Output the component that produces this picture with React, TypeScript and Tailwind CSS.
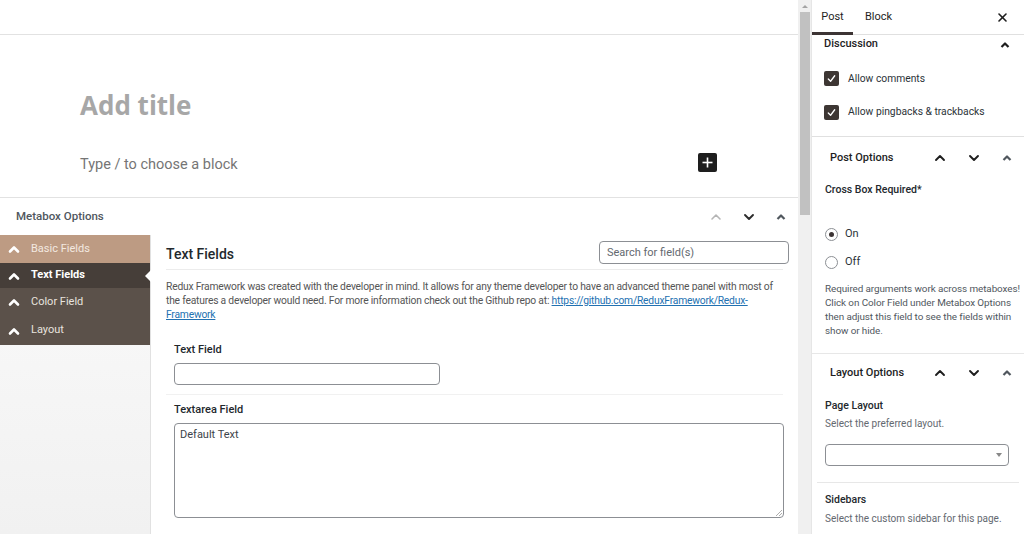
import React from "react";

const Up = ({ className = "", w = 12, sw = 1.6 }: { className?: string; w?: number; sw?: number }) => (
  <svg width={w} height={w} viewBox="0 0 12 12" className={className} fill="none" stroke="currentColor" strokeWidth={sw} strokeLinecap="round" strokeLinejoin="round">
    <polyline points="2,8 6,4 10,8" />
  </svg>
);
const Down = ({ className = "", w = 12, sw = 1.6 }: { className?: string; w?: number; sw?: number }) => (
  <svg width={w} height={w} viewBox="0 0 12 12" className={className} fill="none" stroke="currentColor" strokeWidth={sw} strokeLinecap="round" strokeLinejoin="round">
    <polyline points="2,4 6,8 10,4" />
  </svg>
);
const Caret = ({ className = "" }: { className?: string }) => (
  <svg width="10" height="10" viewBox="0 0 10 10" className={className} fill="none" stroke="currentColor" strokeWidth={2.2} strokeLinejoin="round">
    <polyline points="1.5,7 5,3.5 8.5,7" />
  </svg>
);
const NavChevron = () => (
  <svg width="12" height="10" viewBox="0 0 12 10" fill="none" stroke="white" strokeWidth={2.6} strokeLinecap="round" strokeLinejoin="round">
    <polyline points="2,7.5 6,3.5 10,7.5" />
  </svg>
);
const Check = () => (
  <span className="w-[15px] h-[15px] rounded-[2px] bg-[#3d3633] flex items-center justify-center shrink-0">
    <svg width="11" height="11" viewBox="0 0 12 12" fill="none" stroke="white" strokeWidth={1.4} strokeLinecap="round" strokeLinejoin="round">
      <polyline points="2.5,6.5 5,9 9.5,3" />
    </svg>
  </span>
);

const navItems = [
  { label: "Basic Fields", cls: "h-[28px] bg-[#bd9b83] text-[#f3e9e0]" },
  { label: "Text Fields", cls: "h-[25px] bg-[#463e39] text-white font-bold", active: true },
  { label: "Color Field", cls: "h-[28px] bg-[#5b514a] text-[#e8e3df]" },
  { label: "Layout", cls: "h-[29px] bg-[#5b514a] text-[#e8e3df]" },
];

export default function App() {
  return (
    <div className="flex w-[1024px] h-[534px] overflow-hidden bg-white text-[#1e1e1e]" style={{ fontFamily: 'Roboto, "Noto Sans", sans-serif' }}>
      {/* Main editor */}
      <div className="w-[798px] shrink-0 flex flex-col">
        <div className="h-[35px] border-b border-[#e2e2e2] shrink-0" />
        <div className="h-[163px] border-b border-[#e2e2e2] shrink-0 pl-[80px] pr-[81px] pt-[52px]">
          <div className="text-[26px] leading-[36px] font-bold text-[#a7a7a7]" style={{ fontFamily: '"Open Sans", sans-serif' }}>Add title</div>
          <div className="mt-[31px] flex items-center justify-between">
            <span className="text-[14.5px] leading-[22px] text-[#757575]">Type / to choose a block</span>
            <span className="w-[19px] h-[19px] rounded-[2px] bg-[#1e1e1e] flex items-center justify-center -mt-[5px]">
              <svg width="11" height="11" viewBox="0 0 11 11" stroke="white" strokeWidth={1.6}>
                <line x1="5.5" y1="0.5" x2="5.5" y2="10.5" />
                <line x1="0.5" y1="5.5" x2="10.5" y2="5.5" />
              </svg>
            </span>
          </div>
        </div>
        {/* Metabox */}
        <div className="h-[37px] shrink-0 flex items-center pl-[16px] pr-[12px] pt-[1px]">
          <span className="text-[11.5px] font-medium text-[#50575e] flex-1">Metabox Options</span>
          <div className="flex items-center gap-[21px]">
            <Up className="text-[#b5b5b5]" />
            <Down className="text-[#2c2c2c]" sw={1.9} />
            <Caret className="text-[#50575e]" />
          </div>
        </div>
        <div className="flex flex-1 min-h-0">
          <div className="w-[151px] shrink-0 flex flex-col bg-gradient-to-b from-[#fafafa] to-[#f1f1f1] border-r border-[#e1e1e1]">
            {navItems.map((it) => (
              <div key={it.label} className={`relative flex items-center gap-[11px] pl-[8px] text-[11px] ${it.cls}`}>
                <NavChevron />
                <span>{it.label}</span>
                {it.active && (
                  <span className="absolute right-[-1px] top-1/2 -translate-y-1/2 w-0 h-0 border-y-[6px] border-y-transparent border-r-[6px] border-r-white" />
                )}
              </div>
            ))}
          </div>
          <div className="flex-1 pl-[15px] pr-[9px] pt-[5px] min-w-0">
            <div className="flex items-center justify-between pr-0 border-b border-[#ececec] mr-[6px] pb-[4px]">
              <span className="text-[14px] font-medium text-[#23282d] pt-[4px]">Text Fields</span>
              <input readOnly placeholder="Search for field(s)" className="w-[190px] h-[23px] -mr-[6px] rounded-[4px] border border-[#8c8f94] px-[7px] text-[11px] text-[#555] placeholder:text-[#646970] outline-none" />
            </div>
            <p className="mt-[10px] text-[10.3px] tracking-[-0.21px] leading-[14px] text-[#555] whitespace-nowrap">
              Redux Framework was created with the developer in mind. It allows for any theme developer to have an advanced theme panel with most of
              <br />
              the features a developer would need. For more information check out the Github repo at:{" "}
              <span className="text-[#2271b1] underline">https://github.com/ReduxFramework/Redux-</span>
              <br />
              <span className="text-[#2271b1] underline">Framework</span>
            </p>
            <div className="mt-[21px] pl-[8px]">
              <div className="text-[11px] font-medium text-[#23282d] leading-[14px]">Text Field</div>
              <div className="mt-[6px] w-[266px] h-[22px] rounded-[4px] border border-[#8c8f94]" />
            </div>
            <div className="mt-[9px] border-t border-[#f1f1f1] mr-[6px]" />
            <div className="pl-[8px] pt-[8px]">
              <div className="text-[11px] font-medium text-[#23282d] leading-[14px]">Textarea Field</div>
              <div className="relative mt-[6px] w-[610px] h-[95px] rounded-[4px] border border-[#8c8f94] px-[5px] py-[3px] text-[11px] text-[#3c434a]">
                Default Text
                <svg className="absolute right-[1px] bottom-[1px]" width="7" height="7" viewBox="0 0 7 7" stroke="#999" strokeWidth="0.8">
                  <line x1="1" y1="7" x2="7" y2="1" />
                  <line x1="4" y1="7" x2="7" y2="4" />
                </svg>
              </div>
            </div>
          </div>
        </div>
      </div>

      {/* Scrollbar */}
      <div className="w-[14px] shrink-0 bg-[#f0f0f0] flex flex-col items-center border-r border-[#e6e6e6]">
        <div className="h-[12px] flex items-center justify-center">
          <span className="w-0 h-0 border-x-[3px] border-x-transparent border-b-[3px] border-b-[#a3a3a3]" />
        </div>
        <div className="w-[10px] h-[203px] bg-[#c1c1c1]" />
      </div>

      {/* Sidebar */}
      <div className="flex-1 flex flex-col min-w-0">
        <div className="h-[35px] shrink-0 border-b border-[#e0e0e0] flex items-stretch text-[11px] pt-[1px]">
          <div className="relative w-[41px] flex items-center justify-center">
            <span>Post</span>
            <span className="absolute left-0 right-0 bottom-[-1px] h-[3px] bg-[#3c3434]" />
          </div>
          <div className="ml-[12px] flex items-center">Block</div>
          <div className="flex-1" />
          <div className="w-[24px] mr-[10px] flex items-center justify-center">
            <svg width="9" height="9" viewBox="0 0 9 9" stroke="#1e1e1e" strokeWidth="1.6" strokeLinecap="round">
              <line x1="1" y1="1" x2="8" y2="8" />
              <line x1="8" y1="1" x2="1" y2="8" />
            </svg>
          </div>
        </div>
        {/* Discussion */}
        <div className="pl-[12px] pr-[14px] border-b border-[#e0e0e0] pb-[16px]">
          <div className="flex items-center justify-between h-[17px] pt-[2px]">
            <span className="text-[11px] font-medium text-[#1e1e1e]">Discussion</span>
            <Caret className="text-[#1e1e1e]" />
          </div>
          <div className="mt-[19px] flex items-center gap-[9px] text-[10.3px] text-[#2c3338]">
            <Check />
            <span>Allow comments</span>
          </div>
          <div className="mt-[18px] flex items-center gap-[9px] text-[10.3px] text-[#2c3338]">
            <Check />
            <span>Allow pingbacks &amp; trackbacks</span>
          </div>
        </div>
        {/* Post Options */}
        <div className="border-b border-[#e7e7e7] pb-[15px]">
          <div className="h-[40px] flex items-center pl-[18px] pr-[12px] pt-[2px]">
            <span className="flex-1 text-[11px] font-medium text-[#1e1e1e]">Post Options</span>
            <div className="flex items-center gap-[22px]">
              <Up className="text-[#1e1e1e]" sw={1.9} />
              <Down className="text-[#1e1e1e]" sw={1.9} />
              <Caret className="text-[#50575e]" />
            </div>
          </div>
          <div className="pl-[13px] pr-[4px]">
            <div className="text-[10.5px] font-medium text-[#23282d] leading-[14px] mt-[6px]">Cross Box Required*</div>
            <div className="mt-[29px] flex items-center gap-[7px] text-[11px] text-[#2c3338]">
              <span className="w-[13px] h-[13px] rounded-full border border-[#8c8f94] flex items-center justify-center">
                <span className="w-[5px] h-[5px] rounded-full bg-[#3c3434]" />
              </span>
              <span>On</span>
            </div>
            <div className="mt-[12px] flex items-center gap-[7px] text-[11px] text-[#2c3338]">
              <span className="w-[13px] h-[13px] rounded-full border border-[#8c8f94]" />
              <span>Off</span>
            </div>
            <p className="mt-[11px] text-[9.9px] tracking-[-0.08px] leading-[14px] text-[#50575e] whitespace-nowrap">
              Required arguments work across metaboxes!
              <br />
              Click on Color Field under Metabox Options
              <br />
              then adjust this field to see the fields within
              <br />
              show or hide.
            </p>
          </div>
        </div>
        {/* Layout Options */}
        <div>
          <div className="h-[38px] flex items-center pl-[18px] pr-[12px]">
            <span className="flex-1 text-[11px] font-medium text-[#1e1e1e]">Layout Options</span>
            <div className="flex items-center gap-[22px]">
              <Up className="text-[#1e1e1e]" sw={1.9} />
              <Down className="text-[#1e1e1e]" sw={1.9} />
              <Caret className="text-[#50575e]" />
            </div>
          </div>
          <div className="pl-[13px] pr-[15px]">
            <div className="text-[10.5px] font-medium text-[#23282d] leading-[14px] mt-[7px]">Page Layout</div>
            <div className="mt-[4px] text-[10px] leading-[14px] text-[#646970]">Select the preferred layout.</div>
            <div className="mt-[13px] h-[22px] rounded-[4px] border border-[#8c8f94] flex items-center justify-end pr-[6px]">
              <span className="w-0 h-0 border-x-[3px] border-x-transparent border-t-[4px] border-t-[#888]" />
            </div>
          </div>
          <div className="mx-[5px] mt-[16px] border-t border-[#e7e7e7]" />
          <div className="pl-[13px] pt-[10px]">
            <div className="text-[10.5px] font-medium text-[#23282d] leading-[14px]">Sidebars</div>
            <div className="mt-[5px] text-[10px] leading-[14px] text-[#646970]">Select the custom sidebar for this page.</div>
          </div>
        </div>
      </div>
    </div>
  );
}
